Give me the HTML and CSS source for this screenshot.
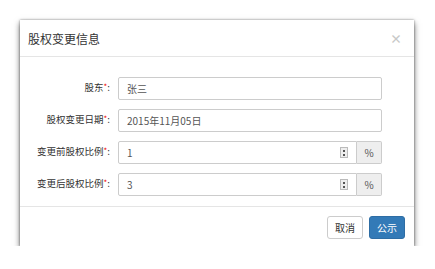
FILE: index.html
```html
<!DOCTYPE html>
<html lang="zh-CN">
<head>
  <meta charset="UTF-8" />
  <title>股权变更信息</title>
  <link rel="stylesheet" href="styles.css">
</head>
<body>

  <div class="modal">
    <div class="modal-header">
      <h4>股权变更信息</h4>
      <span class="close">×</span>
    </div>

    <div class="modal-body">
      <div class="row">
        <label>股东<i>*</i>:</label>
        <div class="field"><input type="text" value="张三"></div>
      </div>
      <div class="row">
        <label>股权变更日期<i>*</i>:</label>
        <div class="field"><input type="text" value="2015年11月05日"></div>
      </div>
      <div class="row">
        <label>变更前股权比例<i>*</i>:</label>
        <div class="field group">
          <div class="num"><span>1</span><b class="spin"></b></div>
          <span class="addon">%</span>
        </div>
      </div>
      <div class="row">
        <label>变更后股权比例<i>*</i>:</label>
        <div class="field group">
          <div class="num"><span>3</span><b class="spin"></b></div>
          <span class="addon">%</span>
        </div>
      </div>
    </div>

    <div class="modal-footer">
      <button class="btn">取消</button>
      <button class="btn primary">公示</button>
    </div>
  </div>

</body>
</html>
```

FILE: styles.css
```css
body {
  margin: 0;
  background: #fff;
  font-family: "Noto Sans CJK SC", "Liberation Sans", sans-serif;
  color: #333;
}

.modal {
  margin: 20px 0 0 20px;
  width: 394px;
  background: #fff;
  box-shadow: 0 3px 6px rgba(0,0,0,0.6), 0 0 2px rgba(0,0,0,0.4);
}

.modal-header {
  height: 36px;
  padding: 0 8px;
  display: flex;
  align-items: center;
  justify-content: space-between;
  border-bottom: 1px solid #e5e5e5;
}

.modal-header h4 {
  margin: 0;
  font-size: 12px;
  font-weight: normal;
  color: #333;
}

.close {
  font-size: 12px;
  font-weight: bold;
  color: #c8c8c8;
  margin-right: 4px;
}

.modal-body {
  padding: 20px 32px 10px 0;
  display: flex;
  flex-direction: column;
  gap: 9px;
}

.row {
  display: flex;
  align-items: center;
}

.row label {
  width: 90px;
  text-align: right;
  font-size: 9.5px;
  line-height: 14px;
  margin: -3px 8px 0 0;
  color: #333;
}

.row label i {
  color: #e00;
  font-style: normal;
  font-size: 8px;
  vertical-align: top;
}

.field {
  flex: 1;
  display: flex;
}

.field input,
.num {
  width: 100%;
  height: 23px;
  box-sizing: border-box;
  border: 1px solid #ccc;
  border-radius: 2px;
  padding: 0 8px;
  font-family: inherit;
  font-size: 10px;
  color: #555;
  outline: none;
}

.num {
  display: flex;
  align-items: center;
  justify-content: space-between;
  border-radius: 2px 0 0 2px;
  padding-right: 8px;
}

.spin {
  width: 8px;
  height: 11px;
  box-sizing: border-box;
  border: 1px solid #bbb;
  background:
    linear-gradient(#555, #555) center 2px / 2px 2px no-repeat,
    linear-gradient(#555, #555) center 6px / 2px 2px no-repeat,
    #eee;
}

.addon {
  width: 25px;
  flex: none;
  height: 23px;
  box-sizing: border-box;
  border: 1px solid #ccc;
  border-left: none;
  border-radius: 0 2px 2px 0;
  background: #eee;
  color: #555;
  font-size: 10px;
  display: flex;
  align-items: center;
  justify-content: center;
}

.modal-footer {
  border-top: 1px solid #e5e5e5;
  padding: 9px 9px 7px;
  display: flex;
  justify-content: flex-end;
  gap: 6px;
}

.btn {
  height: 23px;
  padding: 0 7px;
  font-family: inherit;
  font-size: 10px;
  border: 1px solid #ccc;
  border-radius: 3px;
  background: #fff;
  color: #333;
}

.primary {
  background: #337ab7;
  border-color: #2e6da4;
  color: #fff;
}
```
